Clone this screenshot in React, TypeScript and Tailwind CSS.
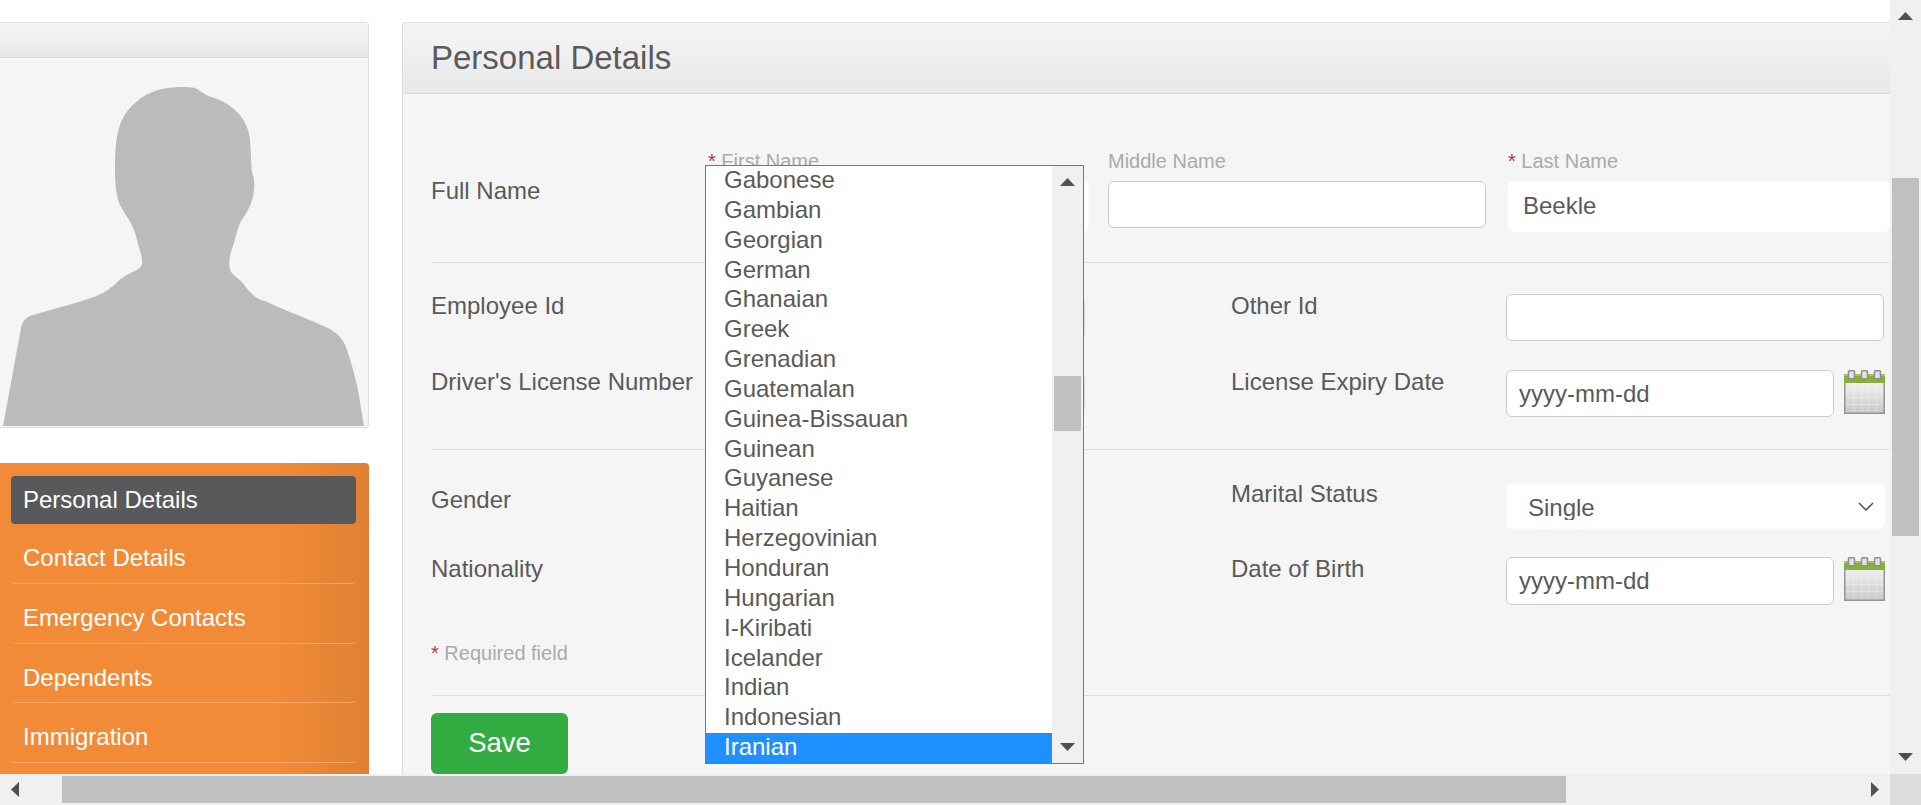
import React from "react"

const nationalities = [
  "Gabonese", "Gambian", "Georgian", "German", "Ghanaian", "Greek", "Grenadian", "Guatemalan",
  "Guinea-Bissauan", "Guinean", "Guyanese", "Haitian", "Herzegovinian", "Honduran", "Hungarian",
  "I-Kiribati", "Icelander", "Indian", "Indonesian", "Iranian",
]

const menu = [
  { name: "Contact Details", cls: "h-[60px] pt-[22px]" },
  { name: "Emergency Contacts", cls: "h-[60px] pt-[22px]" },
  { name: "Dependents", cls: "h-[59px] pt-[22px]" },
  { name: "Immigration", cls: "h-[60px] pt-[22px]" },
]

const Arrow = ({ dir }: { dir: "up" | "down" | "left" | "right" }) => {
  if (dir === "up") return <svg width="15" height="8" viewBox="0 0 15 8" className="shrink-0"><polygon points="7.5,0 15,8 0,8" fill="#505050" /></svg>
  if (dir === "down") return <svg width="15" height="8" viewBox="0 0 15 8" className="shrink-0"><polygon points="0,0 15,0 7.5,8" fill="#505050" /></svg>
  if (dir === "left") return <svg width="8" height="15" viewBox="0 0 8 15" className="shrink-0"><polygon points="8,0 8,15 0,7.5" fill="#505050" /></svg>
  return <svg width="8" height="15" viewBox="0 0 8 15" className="shrink-0"><polygon points="0,0 8,7.5 0,15" fill="#505050" /></svg>
}

const Calendar = ({ id }: { id: string }) => (
  <svg width="41" height="44" viewBox="0 0 41 44" className="ml-[10px] shrink-0">
    <defs>
      <linearGradient id={id} x1="0" y1="0" x2="0" y2="1">
        <stop offset="0" stopColor="#f6f6f6" />
        <stop offset="0.5" stopColor="#e2e2e2" />
        <stop offset="1" stopColor="#c8c8c8" />
      </linearGradient>
    </defs>
    <rect x="0.75" y="5" width="39.5" height="38.25" fill={`url(#${id})`} stroke="#959595" strokeWidth="1.5" />
    <rect x="0" y="4" width="41" height="9" fill="#86b03c" />
    <rect x="0" y="4" width="41" height="2" fill="#a3c65e" />
    {[7.5, 20.5, 33.5].map((x) => (
      <rect key={x} x={x - 3} y="0.75" width="6" height="8" rx="1" fill="#e2e2e2" stroke="#8f8f8f" strokeWidth="1.5" />
    ))}
    {[9, 17, 24, 32].map((x) => (
      <rect key={x} x={x} y="14" width="1" height="28" fill="#ffffff" opacity="0.3" />
    ))}
    {[20, 27, 34].map((y) => (
      <rect key={y} x="2" y={y} width="37" height="1" fill="#ffffff" opacity="0.3" />
    ))}
  </svg>
)

const Field = ({ w, h, placeholder }: { w: string; h: string; placeholder?: string }) => (
  <input
    readOnly
    placeholder={placeholder}
    className={`${w} ${h} rounded-md border border-[#cccccc] bg-white px-3 text-[24px] text-[#5a5a5a] outline-none placeholder:text-[#5a5a5a]`}
  />
)

const SmallLabel = ({ text, star }: { text: string; star?: boolean }) => (
  <div className="h-6 text-[20px] leading-6 text-[#aaaaaa]">
    {star && <span className="text-[#a94442]">* </span>}
    {text}
  </div>
)

const NationalityPopup = () => (
  <div className="absolute left-0 top-4 z-10 flex h-[599px] w-[379px] border border-[#767676] bg-white">
    <ul className="flex-1">
      {nationalities.map((n) => (
        <li
          key={n}
          className={`h-[29.85px] pl-[18px] text-[24px] leading-[28.4px] ${n === "Iranian" ? "bg-[#1e90ff] text-white" : "text-[#5a5a5a]"}`}
        >
          {n}
        </li>
      ))}
    </ul>
    <div className="flex w-[31px] flex-col items-center bg-[#f0f0f0]">
      <div className="mt-3"><Arrow dir="up" /></div>
      <div className="mt-[190px] h-[55px] w-[27px] bg-[#c0c0c0]" />
      <div className="mb-3 mt-auto"><Arrow dir="down" /></div>
    </div>
  </div>
)

const Avatar = () => (
  <svg viewBox="0 58 368 369" className="block h-[369px] w-[368px]">
    <path
      fill="#bbbbbb"
      d="M3 426 L21 328 C23 319 27 317 33 315 C58 307 85 302 103 293 C112 288 117 282 122 278 C130 272 141 270 142 264 C143 256 138 246 136 236 C134 226 125 214 120 205 C116 196 115 185 115 167 C115 150 116 135 121 122 C128 106 142 95 158 90 C168 87 185 86 195 88 C200 90 204 95 211 97 C222 100 229 104 237 112 C245 120 249 130 250 140 C251 150 251 165 252 172 C254 178 255 182 254 190 C253 200 249 210 243 218 C237 226 237 235 233 246 C229 256 228 265 231 272 C235 277 240 279 245 286 C251 294 258 300 265 301 C285 311 307 318 328 328 C338 333 344 340 347 350 C351 362 354 372 357 385 C360 400 362 415 364 426 Z"
    />
  </svg>
)

export default function App() {
  return (
    <div className="grid h-screen grid-cols-[1fr_31px] grid-rows-[1fr_31px] overflow-hidden bg-white font-['Liberation_Sans',Arial,sans-serif] text-[#5a5a5a]">
      <div className="flex min-h-0 min-w-0 overflow-hidden pt-[22px]">
        {/* Left column */}
        <aside className="flex w-[369px] shrink-0 flex-col">
          <div className="rounded-r border border-l-0 border-[#dddddd] bg-[#f5f5f5]">
            <div className="h-[35px] border-b border-[#dddddd] bg-gradient-to-b from-[#f5f5f5] to-[#e8e8e8]" />
            <Avatar />
          </div>
          <nav className="mt-[35px] flex-1 rounded-tr bg-gradient-to-r from-[#f28b38] from-[75%] to-[#de8033] pl-[11px] pr-[13px] pt-[13px] text-[24px] text-white">
            <div className="flex h-12 items-center rounded bg-[#58595b] pl-3">Personal Details</div>
            {menu.map((m) => (
              <div key={m.name} className={`${m.cls} rounded-b border-b border-[#f7a567] pl-3 leading-6`}>
                {m.name}
              </div>
            ))}
          </nav>
        </aside>

        {/* Main panel */}
        <main className="relative ml-[33px] min-w-0 flex-1 overflow-hidden rounded-tl border-l border-t border-[#dddddd] bg-[#f5f5f5]">
          <div className="flex h-[71px] items-center border-b border-[#dddddd] bg-gradient-to-b from-[#f5f5f5] to-[#e8e8e8] pl-[28px] text-[33px]">
            Personal Details
          </div>
          <div className="pl-[28px]">
            <section className="flex h-[169px] border-b border-[#dddddd] pt-[55px] text-[24px]">
              <div className="w-[274px] shrink-0 pt-[30px] leading-6">Full Name</div>
              <div className="relative w-[384px] shrink-0">
                <div className="pl-[3px]"><SmallLabel text="First Name" star /></div>
                <div className="mt-2 h-[51px] rounded-md bg-white" />
                <NationalityPopup />
              </div>
              <div className="ml-[19px] w-[378px] shrink-0">
                <SmallLabel text="Middle Name" />
                <div className="mt-2"><Field w="w-full" h="h-[47px]" /></div>
              </div>
              <div className="ml-[22px] min-w-0 flex-1">
                <SmallLabel text="Last Name" star />
                <input
                  readOnly
                  value="Beekle"
                  className="mt-2 h-[51px] w-full rounded-md bg-white pb-[2px] pl-[15px] text-[24px] text-[#5a5a5a] outline-none"
                />
              </div>
            </section>

            <section className="grid grid-cols-[274px_380px_146px_275px_379px] gap-y-[29px] border-b border-[#dddddd] pb-[32px] pt-[31px] text-[24px] leading-6">
              <div>Employee Id</div>
              <div className="mt-[3px] h-[43px] rounded-md border border-[#dddddd] bg-white" />
              <div />
              <div>Other Id</div>
              <Field w="w-[378px]" h="h-[47px]" />

              <div>Driver's License Number</div>
              <div className="mt-[3px] h-[40px] rounded-md border border-[#dddddd] bg-white" />
              <div />
              <div>License Expiry Date</div>
              <div className="flex items-start">
                <Field w="w-[328px]" h="h-[47px]" placeholder="yyyy-mm-dd" />
                <Calendar id="cal-expiry" />
              </div>
            </section>

            <section className="grid grid-cols-[274px_380px_146px_275px_379px] border-b border-[#dddddd] pt-[33px] text-[24px] leading-6">
              <div className="mt-[5px]">Gender</div>
              <div />
              <div />
              <div className="-mt-px">Marital Status</div>
              <div className="relative h-[46px]">
                <select className="h-full w-full appearance-none rounded-md bg-white pl-[22px] pt-1 text-[24px] text-[#5a5a5a] outline-none">
                  <option>Single</option>
                </select>
                <svg width="16" height="9" viewBox="0 0 16 9" className="absolute right-[11px] top-[19px]">
                  <path d="M1 1 L8 8 L15 1" fill="none" stroke="#555555" strokeWidth="1.6" />
                </svg>
              </div>

              <div className="mt-[28px]">Nationality</div>
              <div />
              <div />
              <div className="mt-[28px]">Date of Birth</div>
              <div className="mt-[28px] flex items-start">
                <Field w="w-[328px]" h="h-[48px]" placeholder="yyyy-mm-dd" />
                <Calendar id="cal-birth" />
              </div>

              <div className="col-span-5 mt-[36px] h-[54px] text-[20px] text-[#aaaaaa]">
                <span className="text-[#a94442]">* </span>Required field
              </div>
            </section>

            <button className="mt-[17px] h-[61px] w-[137px] rounded-md bg-[#33ad42] pb-[2px] text-[27.5px] text-white">Save</button>
          </div>
        </main>
      </div>

      {/* Vertical scrollbar */}
      <div className="flex flex-col items-center bg-[#f0f0f0]">
        <div className="mt-3"><Arrow dir="up" /></div>
        <div className="mt-[158px] h-[358px] w-[27px] bg-[#c0c0c0]" />
        <div className="mb-[13px] mt-auto"><Arrow dir="down" /></div>
      </div>

      {/* Horizontal scrollbar */}
      <div className="flex items-center bg-[#f0f0f0]">
        <div className="ml-[11px]"><Arrow dir="left" /></div>
        <div className="ml-[43px] h-[27px] w-[1504px] bg-[#c0c0c0]" />
        <div className="ml-auto mr-[11px]"><Arrow dir="right" /></div>
      </div>
      <div className="bg-[#dcdcdc]" />
    </div>
  )
}
